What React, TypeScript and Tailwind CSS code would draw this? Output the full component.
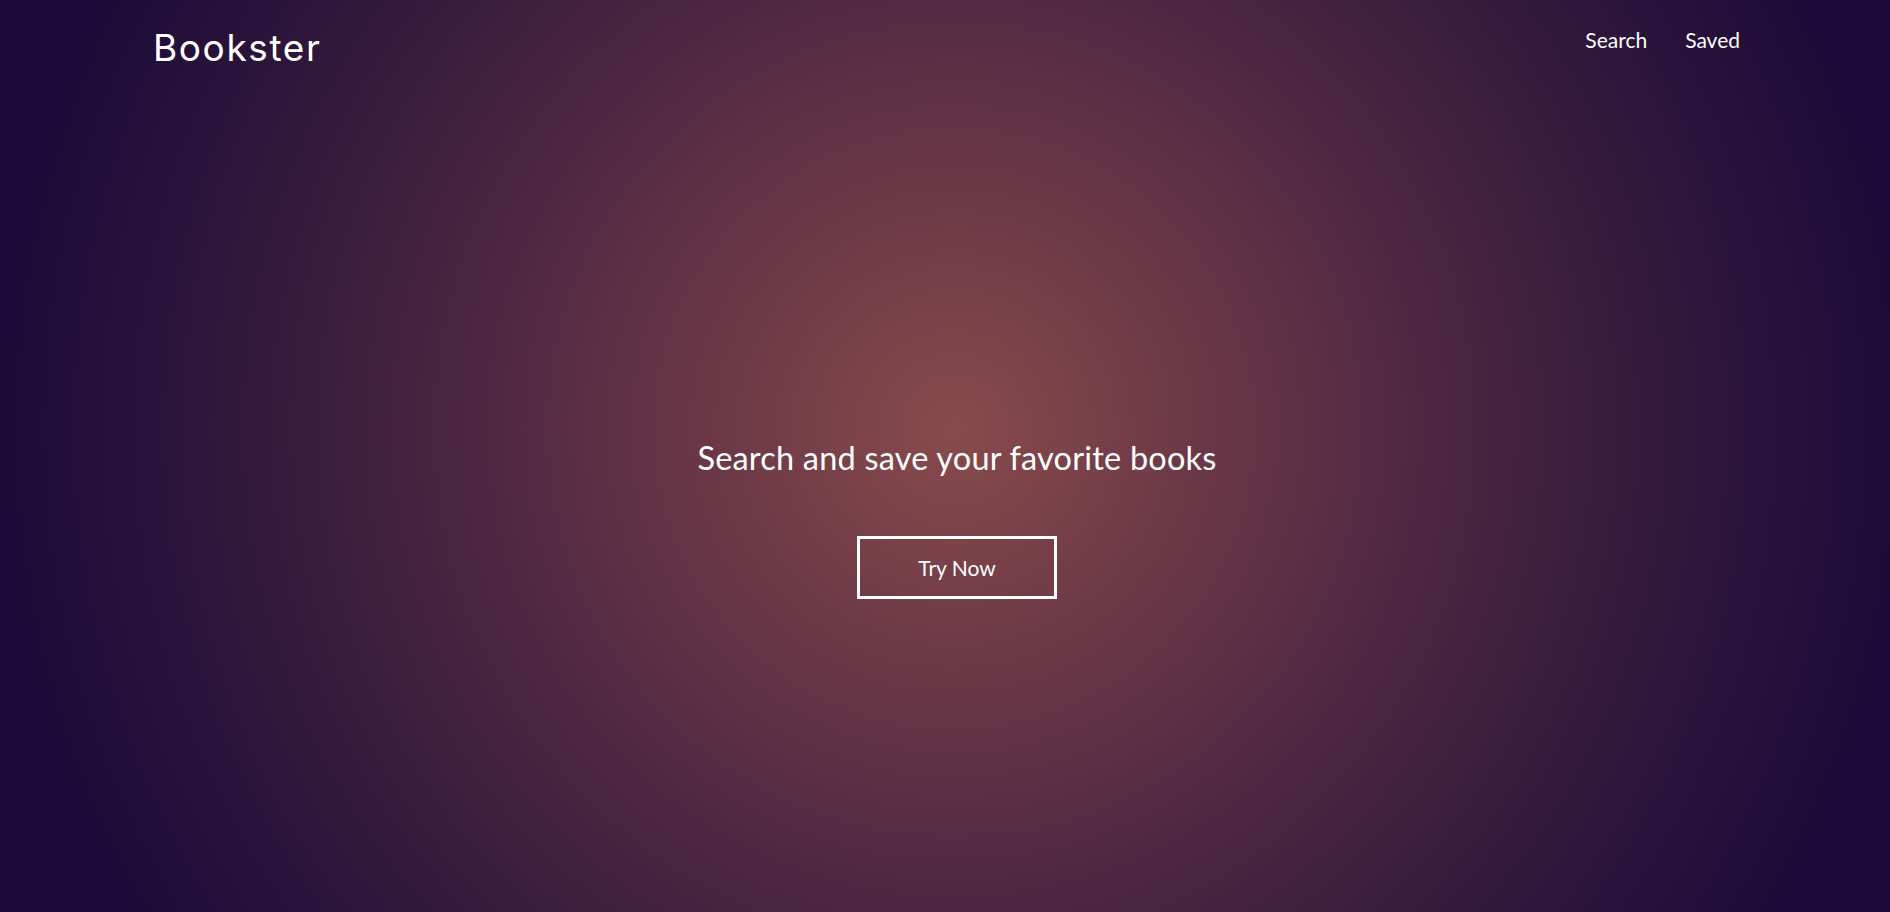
import React from "react";

export default function App() {
  return (
    <main className="relative h-[912px] w-full overflow-hidden bg-[radial-gradient(circle_farthest-side_at_50.5%_47%,#884b4b_0%,#6c3847_25%,#4c2741_50%,#32183c_75%,#1c0b38_100%)] text-white">
      {/* ── Header ── */}
      <header className="flex items-start justify-between pl-[153px] pr-[150px] pt-[24px]">
        <h1 className="text-[37px] leading-[48px] tracking-[1.6px] font-normal" style={{ fontFamily: "Inter, 'Noto Sans', sans-serif" }}>
          Bookster
        </h1>
        <nav className="flex gap-[38px] pt-0 text-[21px] font-['Lato',sans-serif]">
          <a href="#" className="text-white">Search</a>
          <a href="#" className="text-white">Saved</a>
        </nav>
      </header>

      {/* ── Hero ── */}
      <section className="flex flex-col items-center pl-[24px] pt-[366px] font-['Lato',sans-serif]">
        <h2 className="text-[32.5px] leading-[40px] font-normal tracking-[0.2px]">Search and save your favorite books</h2>
        <button className="mt-[58px] h-[63px] w-[200px] border-[3px] border-white text-[21px]">
          Try Now
        </button>
      </section>
    </main>
  );
}
